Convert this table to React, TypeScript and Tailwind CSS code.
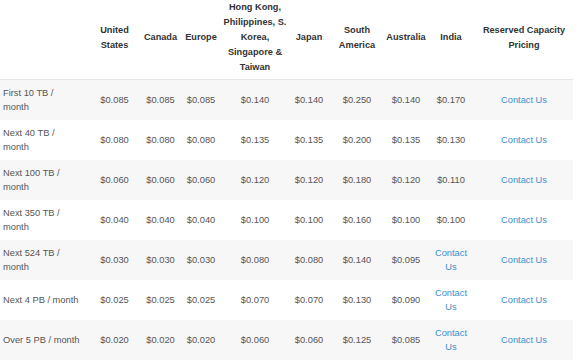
import React from "react";

const headers: string[][] = [
  [],
  ["United", "States"],
  ["Canada"],
  ["Europe"],
  ["Hong Kong,", "Philippines, S.", "Korea,", "Singapore &", "Taiwan"],
  ["Japan"],
  ["South", "America"],
  ["Australia"],
  ["India"],
  ["Reserved Capacity", "Pricing"],
];

const rows: { label: string[]; vals: string[]; indiaWrap: boolean }[] = [
  { label: ["First 10 TB /", "month"], vals: ["$0.085", "$0.085", "$0.085", "$0.140", "$0.140", "$0.250", "$0.140", "$0.170"], indiaWrap: false },
  { label: ["Next 40 TB /", "month"], vals: ["$0.080", "$0.080", "$0.080", "$0.135", "$0.135", "$0.200", "$0.135", "$0.130"], indiaWrap: false },
  { label: ["Next 100 TB /", "month"], vals: ["$0.060", "$0.060", "$0.060", "$0.120", "$0.120", "$0.180", "$0.120", "$0.110"], indiaWrap: false },
  { label: ["Next 350 TB /", "month"], vals: ["$0.040", "$0.040", "$0.040", "$0.100", "$0.100", "$0.160", "$0.100", "$0.100"], indiaWrap: false },
  { label: ["Next 524 TB /", "month"], vals: ["$0.030", "$0.030", "$0.030", "$0.080", "$0.080", "$0.140", "$0.095"], indiaWrap: true },
  { label: ["Next 4 PB / month"], vals: ["$0.025", "$0.025", "$0.025", "$0.070", "$0.070", "$0.130", "$0.090"], indiaWrap: true },
  { label: ["Over 5 PB / month"], vals: ["$0.020", "$0.020", "$0.020", "$0.060", "$0.060", "$0.125", "$0.085"], indiaWrap: true },
];

const gridCols = "grid grid-cols-[89px_51px_41px_40px_68px_40px_56px_42px_48px_98px]";

export default function App() {
  return (
    <div
      className="w-[580px] h-[360px] bg-white overflow-hidden"
      style={{ fontFamily: '"Liberation Sans", Arial, sans-serif' }}
    >
      <div className="w-[573px]">
        {/* header */}
        <div className={`${gridCols} h-[80px] pb-[7px] border-b border-[#e6e6e6]`}>
          {headers.map((h, i) => (
            <div
              key={i}
              className="flex flex-col items-center justify-center text-center text-[9.2px] leading-[15px] font-bold text-[#333333] whitespace-nowrap"
            >
              {h.map((l, j) => (
                <span key={j}>{l}</span>
              ))}
            </div>
          ))}
        </div>
        {/* body */}
        {rows.map((r, ri) => (
          <div
            key={ri}
            className={`${gridCols} h-[40px] ${ri % 2 === 0 ? "bg-[#f7f7f7]" : "bg-white"} text-[9.3px] leading-[14px] text-[#555555]`}
          >
            <div className="flex flex-col justify-center pl-[3px] pb-[1px] whitespace-nowrap">
              {r.label.map((l, j) => (
                <span key={j}>{l}</span>
              ))}
            </div>
            {r.vals.map((v, vi) => (
              <div key={vi} className="flex items-center justify-center pb-[1px] whitespace-nowrap">
                {v}
              </div>
            ))}
            {r.indiaWrap && (
              <div className="flex flex-col items-center justify-center pb-[1px] text-[#3b8fcf] whitespace-nowrap">
                <span>Contact</span>
                <span>Us</span>
              </div>
            )}
            <div className="flex items-center justify-center pb-[1px] text-[#3b8fcf] whitespace-nowrap">
              Contact Us
            </div>
          </div>
        ))}
      </div>
    </div>
  );
}
